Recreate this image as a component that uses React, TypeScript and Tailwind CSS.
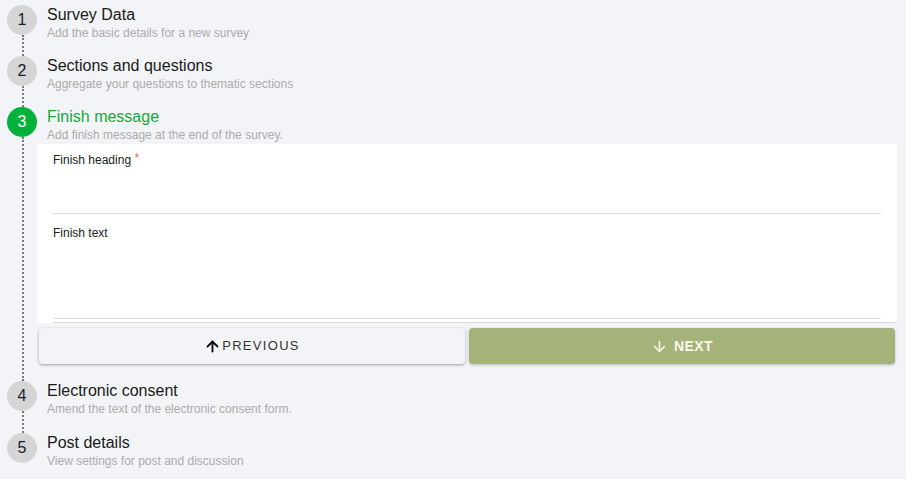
import React from 'react';
import { ArrowUp, ArrowDown } from 'lucide-react';

interface StepProps {
  num: number;
  title: string;
  subtitle: string;
  active?: boolean;
  last?: boolean;
  height?: string;
  children?: React.ReactNode;
}

const Step: React.FC<StepProps> = ({ num, title, subtitle, active, last, height, children }) => {
  return (
    <div className={`flex ${height ?? ''}`}>
      <div className="flex w-[30px] shrink-0 flex-col items-center">
        <div
          className={`flex h-[30px] w-[30px] items-center justify-center rounded-full text-[16px] ${
            active ? 'bg-[#00b23b] text-white' : 'bg-[#d5d5d5] text-[#1c1c2e]'
          }`}
        >
          {num}
        </div>
        {!last && <div className="ml-[1px] w-0 flex-1 border-l-2 border-dotted border-[#7a7a7a]" />}
      </div>
      <div className="min-w-0 flex-1">
        <div className="pl-[10px]">
          <div className={`text-[16px] leading-[20px] ${active ? 'text-[#17a83d]' : 'text-[#1a1a1a]'}`}>{title}</div>
          <div className="text-[12px] leading-[16px] text-[#ababab]">{subtitle}</div>
        </div>
        {children}
      </div>
    </div>
  );
};

const App: React.FC = () => {
  return (
    <div className="min-h-[479px] w-full bg-[#f3f4f8] pl-[7px] pr-[9px] pt-[5px] font-['Liberation_Sans',Arial,sans-serif]">
      <Step num={1} title="Survey Data" subtitle="Add the basic details for a new survey" height="h-[51px]" />
      <Step num={2} title="Sections and questions" subtitle="Aggregate your questions to thematic sections" height="h-[51px]" />
      <Step num={3} title="Finish message" subtitle="Add finish message at the end of the survey." active>
        <div className="mt-[1px] flex h-[179px] flex-col bg-white">
          <div className="px-4 pt-[9px]">
            <div className="text-[12px] leading-[14px] text-[#222]">
              Finish heading <span className="relative -top-[2px] text-[12px] text-[#e06c6c]">*</span>
            </div>
            <div className="mt-[46px] h-px bg-[#dcdcdc]" />
            <div className="mt-[12px] text-[12px] leading-[14px] text-[#222]">Finish text</div>
            <div className="mt-[78px] h-px bg-[#dcdcdc]" />
          </div>
          <div className="mt-auto ml-4 h-px bg-[#d8d8d8]" />
        </div>
        <div className="mt-[5px] grid grid-cols-2 gap-[4px] px-[2px] pb-[17px]">
          <button className="flex h-[36px] items-center justify-center rounded-[4px] bg-[#f3f4f8] text-[13px] tracking-[1.3px] text-[#333] shadow-[0_1px_3px_rgba(0,0,0,0.35)]">
            <ArrowUp size={17} strokeWidth={2.6} className="mr-[1px] text-black" />
            PREVIOUS
          </button>
          <button className="flex h-[36px] items-center justify-center gap-[6px] rounded-[4px] bg-[#a3b37a] text-[14px] font-bold tracking-[0.4px] text-[#fdf5ea] shadow-[0_1px_3px_rgba(0,0,0,0.25)]">
            <ArrowDown size={17} strokeWidth={2.2} />
            NEXT
          </button>
        </div>
      </Step>
      <Step num={4} title="Electronic consent" subtitle="Amend the text of the electronic consent form." height="h-[52px]" />
      <Step num={5} title="Post details" subtitle="View settings for post and discussion" last />
    </div>
  );
};

export default App;
